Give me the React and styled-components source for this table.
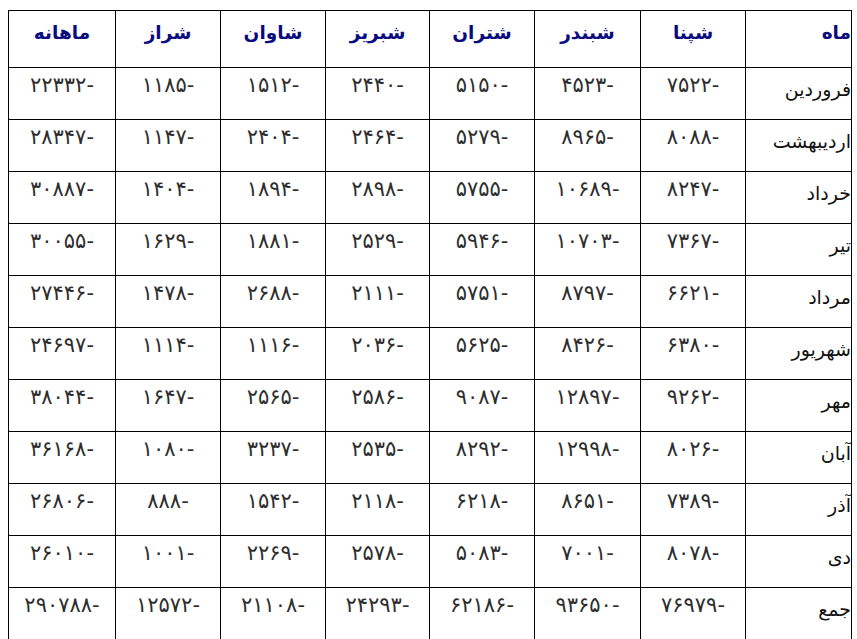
import React from "react";
import styled, { createGlobalStyle } from "styled-components";

const Global = createGlobalStyle`
  html, body { margin: 0; padding: 0; background: #fff; }
  body { padding: 10px 0 0 8px; font-family: "DejaVu Sans", "Noto Sans", sans-serif; }
`;

const Table = styled.table`
  direction: rtl;
  border-collapse: collapse;
  table-layout: fixed;
  width: 843px;
`;

const Col = styled.col`
  width: ${(p) => p.$w}px;
`;

const HeadRow = styled.tr`
  height: 57px;
`;

const BodyRow = styled.tr`
  height: 52px;
`;

const HeadCell = styled.th`
  border: 1px solid #000;
  color: #0b0b80;
  font-size: 18.5px;
  font-weight: bold;
  line-height: 24px;
  text-align: ${(p) => (p.$first ? "right" : "center")};
  vertical-align: top;
  padding: ${(p) => (p.$first ? "10px 0 0 0" : "10px 4px 0")};
`;

const MonthCell = styled.td`
  border: 1px solid #000;
  color: #111;
  font-size: 19px;
  line-height: 26px;
  text-align: right;
  vertical-align: top;
  padding: 8px 0 0 0;
  white-space: nowrap;
`;

const NumCell = styled.td`
  border: 1px solid #000;
  color: #2e2e2e;
  font-size: 21px;
  line-height: 26px;
  text-align: center;
  vertical-align: top;
  padding: 4px 4px 0;
  white-space: nowrap;
`;

const headers = ["ماه", "شپنا", "شبندر", "شتران", "شبریز", "شاوان", "شراز", "ماهانه"];
const widths = [106, 105, 106, 105, 104, 105, 105, 107];

const rows = [
  ["فروردین", "۷۵۲۲", "۴۵۲۳", "۵۱۵۰", "۲۴۴۰", "۱۵۱۲", "۱۱۸۵", "۲۲۳۳۲"],
  ["اردیبهشت", "۸۰۸۸", "۸۹۶۵", "۵۲۷۹", "۲۴۶۴", "۲۴۰۴", "۱۱۴۷", "۲۸۳۴۷"],
  ["خرداد", "۸۲۴۷", "۱۰۶۸۹", "۵۷۵۵", "۲۸۹۸", "۱۸۹۴", "۱۴۰۴", "۳۰۸۸۷"],
  ["تیر", "۷۳۶۷", "۱۰۷۰۳", "۵۹۴۶", "۲۵۲۹", "۱۸۸۱", "۱۶۲۹", "۳۰۰۵۵"],
  ["مرداد", "۶۶۲۱", "۸۷۹۷", "۵۷۵۱", "۲۱۱۱", "۲۶۸۸", "۱۴۷۸", "۲۷۴۴۶"],
  ["شهریور", "۶۳۸۰", "۸۴۲۶", "۵۶۲۵", "۲۰۳۶", "۱۱۱۶", "۱۱۱۴", "۲۴۶۹۷"],
  ["مهر", "۹۲۶۲", "۱۲۸۹۷", "۹۰۸۷", "۲۵۸۶", "۲۵۶۵", "۱۶۴۷", "۳۸۰۴۴"],
  ["آبان", "۸۰۲۶", "۱۲۹۹۸", "۸۲۹۲", "۲۵۳۵", "۳۲۳۷", "۱۰۸۰", "۳۶۱۶۸"],
  ["آذر", "۷۳۸۹", "۸۶۵۱", "۶۲۱۸", "۲۱۱۸", "۱۵۴۲", "۸۸۸", "۲۶۸۰۶"],
  ["دی", "۸۰۷۸", "۷۰۰۱", "۵۰۸۳", "۲۵۷۸", "۲۲۶۹", "۱۰۰۱", "۲۶۰۱۰"],
  ["جمع", "۷۶۹۷۹", "۹۳۶۵۰", "۶۲۱۸۶", "۲۴۲۹۳", "۲۱۱۰۸", "۱۲۵۷۲", "۲۹۰۷۸۸"],
];

export default function App() {
  return (
    <>
      <Global />
      <Table>
        <colgroup>
          {widths.map((w, i) => (
            <Col key={i} $w={w} />
          ))}
        </colgroup>
        <thead>
          <HeadRow>
            {headers.map((h, i) => (
              <HeadCell key={h} $first={i === 0}>
                {h}
              </HeadCell>
            ))}
          </HeadRow>
        </thead>
        <tbody>
          {rows.map(([month, ...nums]) => (
            <BodyRow key={month}>
              <MonthCell>{month}</MonthCell>
              {nums.map((n, i) => (
                <NumCell key={i}>{"-" + n}</NumCell>
              ))}
            </BodyRow>
          ))}
        </tbody>
      </Table>
    </>
  );
}
